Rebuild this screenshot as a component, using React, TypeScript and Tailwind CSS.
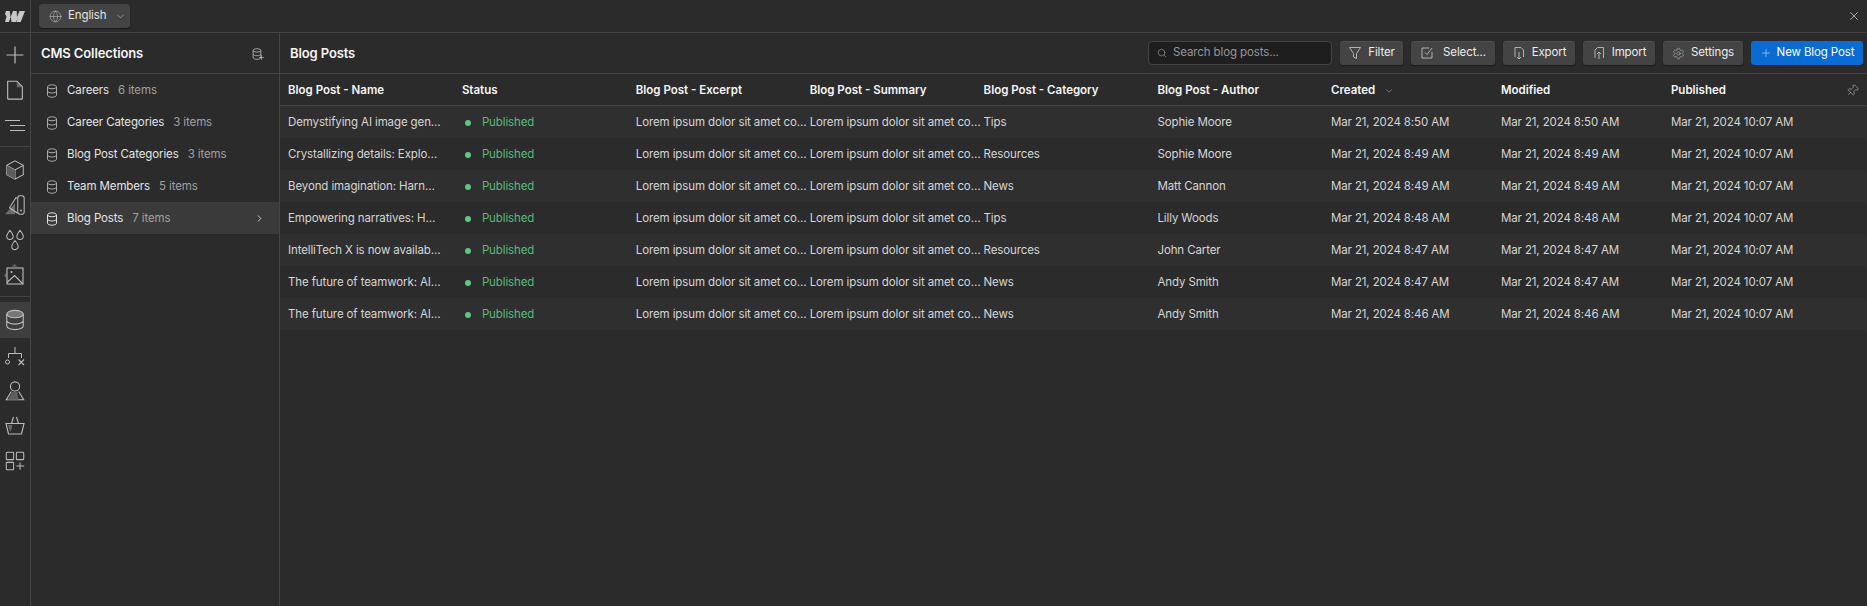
import React from "react";
import { Globe, ChevronDown, ChevronRight, X, Search, Plus, Pin, Settings } from "lucide-react";

const S = ({ children, size = 22 }: { children: React.ReactNode; size?: number }) => (
  <svg width={size} height={size} viewBox="0 0 24 24" fill="none" stroke="currentColor" strokeWidth="1">
    {children}
  </svg>
);

const Db = ({ size = 14 }: { size?: number }) => (
  <svg width={size} height={size} viewBox="0 0 14 14" fill="none" stroke="currentColor" strokeWidth="1">
    <ellipse cx="7" cy="2.800" rx="4.500" ry="2" />
    <path d="M2.500 2.800v8.400c0 1.100 2 2 4.500 2s4.500-.9 4.500-2V2.800M2.500 7c0 1.100 2 2 4.500 2s4.500-.9 4.500-2" />
  </svg>
);

const railTop = [
  <S size={24}><path d="M12 3.500v17M3.500 12h17" strokeWidth="1.200" /></S>,
  <S size={22}><path d="M4 2.500h10l6 6v13a.5.5 0 0 1-.5.5h-15a.5.5 0 0 1-.5-.5z" strokeWidth="1.200" /><path d="M14 3.500l5.500 5.500H14z" fill="#6a6a6a" stroke="none" /></S>,
  <S size={24}><path d="M2 7.500h15M7 12.500h15M7 17.500h15" strokeWidth="1.100" /></S>,
];
const railMid = [
  <S size={22}><path d="M12 2l9 5v10l-9 5-9-5V7z M3 7l9 5 9-5M12 12v10" strokeWidth="1.100" /><path d="M3 7l9 5v10l-9-5z" fill="#5e5e5e" stroke="none" /></S>,
  <S size={22}><path d="M1 22l11-12v12z" fill="#6a6a6a" stroke="none" /><rect x="15" y="2" width="7" height="20" rx="2.500" strokeWidth="1.100" /><path d="M15 5l-2-1-7 11 9 6" strokeWidth="1.100" /><circle cx="18.500" cy="18" r="1" fill="currentColor" stroke="none" /></S>,
  <S size={22}><path d="M6.500 1.500c2 2.500 3.500 4.500 3.500 6.500a3.500 3.500 0 0 1-7 0c0-2 1.500-4 3.500-6.500zM17.500 1.500c2 2.500 3.500 4.500 3.500 6.500a3.500 3.500 0 0 1-7 0c0-2 1.500-4 3.500-6.500zM12 12.500c2 2.500 3.500 4.500 3.500 6.500a3.500 3.500 0 0 1-7 0c0-2 1.500-4 3.500-6.500z" strokeWidth="1.100" /></S>,
  <S size={24}><path d="M11.500 1l3 2.500h-6zM1 12.500l2.500-3v6z" fill="#666" stroke="none" /><rect x="4" y="5" width="16" height="16" strokeWidth="1.100" /><path d="M4 19.500l7.500-7 8.500 8.500" strokeWidth="1.100" /><circle cx="8.500" cy="9" r="1" fill="currentColor" stroke="none" /></S>,
];
const railBottom = [
  <S size={24}><path d="M12 3v6.500M5.500 14v-4.500h13V14" strokeWidth="1" /><circle cx="4.500" cy="18" r="2" strokeWidth="1" /><path d="M15.500 15.500l5.500 5.500M21 15.500L15.500 21" strokeWidth="1.100" /></S>,
  <S size={22}><circle cx="12" cy="7" r="5" strokeWidth="1.200" /><path d="M8 12.500L2.500 21.500h19L16 12.500" strokeWidth="1.200" /><path d="M9 13h5.500l1.500 8.500H4z" fill="#5e5e5e" stroke="none" /></S>,
  <S size={24}><path d="M3 9.500h18l-2.500 10.500h-13zM8.500 9.500l2-6.500M15.500 9.500l-2-6.500" strokeWidth="1.100" /><path d="M5 11h4v3l-2 4z" fill="#666" stroke="none" /></S>,
  <S size={22}><rect x="2.500" y="2.500" width="8" height="8" rx=".8" strokeWidth="1.100" /><rect x="13.500" y="2.500" width="8" height="8" rx=".8" strokeWidth="1.100" /><rect x="2.500" y="13.500" width="8" height="8" rx=".8" strokeWidth="1.100" /><path d="M17.500 13.500v8M13.500 17.500h8.500" strokeWidth="1.100" /></S>,
];

const collections = [
  ["Careers", "6 items"],
  ["Career Categories", "3 items"],
  ["Blog Post Categories", "3 items"],
  ["Team Members", "5 items"],
  ["Blog Posts", "7 items"],
];

const lorem = "Lorem ipsum dolor sit amet consectetur";
const rows = [
  ["Demystifying AI image generation", "Tips", "Sophie Moore", "Mar 21, 2024 8:50 AM"],
  ["Crystallizing details: Exploring AI", "Resources", "Sophie Moore", "Mar 21, 2024 8:49 AM"],
  ["Beyond imagination: Harnessing AI", "News", "Matt Cannon", "Mar 21, 2024 8:49 AM"],
  ["Empowering narratives: How AI", "Tips", "Lilly Woods", "Mar 21, 2024 8:48 AM"],
  ["IntelliTech X is now available today", "Resources", "John Carter", "Mar 21, 2024 8:47 AM"],
  ["The future of teamwork: AI-powered", "News", "Andy Smith", "Mar 21, 2024 8:47 AM"],
  ["The future of teamwork: AI-powered", "News", "Andy Smith", "Mar 21, 2024 8:46 AM"],
];

const Btn = ({ icon, label, w }: { icon: React.ReactNode; label: string; w: string }) => (
  <div className={`${w} h-6 flex items-center justify-center gap-[6px] rounded-[3px] bg-[#444444] text-[#ececec] shadow-[0_1px_1px_rgba(0,0,0,0.4),inset_0_1px_0_rgba(255,255,255,0.06)]`}>
    <span className="text-[#bdbdbd] flex">{icon}</span>
    <span>{label}</span>
  </div>
);

const Col = ({ children, w, cls = "pr-[2px]" }: { children: React.ReactNode; w: string; cls?: string }) => (
  <div className={`${w} ${cls} shrink-0 truncate`}>{children}</div>
);

export default function App() {
  return (
    <div className="h-[606px] w-[1867px] flex bg-[#2b2b2b] text-[11.5px] tracking-[-0.01em] overflow-hidden font-['Inter',sans-serif] text-[#d6d6d6]">
      <aside className="w-[31px] shrink-0 border-r border-[#444444] flex flex-col text-[#bcbcbc]">
        <div className="h-[33px] shrink-0 border-b border-[#444444] flex items-center justify-center pr-[1px]">
          <svg width="20" height="11" viewBox="0 0 20 11" fill="#c8c8c8">
            <path d="M20 0l-4.300 11h-4.200l1.800-4.600-2.300 4.600H6.500L5.800 5.500 4 11H0l1.500-5.500L0 3 1 0h3.700l.9 6L8 0h3.700l.3 6L14.500 0z" />
          </svg>
        </div>
        <div className="flex flex-col py-1 border-b border-[#444444]">
          {railTop.map((icon, i) => (
            <div key={i} className="h-[35px] flex items-center justify-center pr-[1px]">{icon}</div>
          ))}
        </div>
        <div className="flex flex-col pt-[5px] pb-[4px] border-b border-[#444444]">
          {railMid.map((icon, i) => (
            <div key={i} className="h-[35px] flex items-center justify-center pr-[1px]">{icon}</div>
          ))}
        </div>
        <div className="flex flex-col pt-[5px]">
          <div className="h-[36px] bg-[#3e3e3e] flex items-center justify-center pr-[1px]">
            <S size={22}>
              <ellipse cx="12" cy="5.500" rx="9" ry="4" strokeWidth="1.200" fill="#777" />
              <path d="M3 5.500v13c0 2.200 4 4 9 4s9-1.800 9-4v-13M3 12.500c0 2.200 4 4 9 4s9-1.800 9-4" strokeWidth="1.200" />
            </S>
          </div>
          {railBottom.map((icon, i) => (
            <div key={i} className="h-[35px] flex items-center justify-center pr-[1px]">{icon}</div>
          ))}
        </div>
      </aside>

      <div className="flex-1 min-w-0 flex flex-col">
        <header className="h-[33px] shrink-0 border-b border-[#444444] flex items-center pl-2 pr-[5px] justify-between">
          <div className="h-6 w-[91px] rounded-[4px] bg-[#444444] flex items-center pl-[10px] gap-[6px] text-[#e4e4e4] shadow-[0_1px_1px_rgba(0,0,0,0.4)]">
            <Globe size={13} strokeWidth={1} className="text-[#c4c4c4]" />
            <span>English</span>
            <ChevronDown size={11} strokeWidth={1.300} className="ml-[3px] text-[#bdbdbd]" />
          </div>
          <X size={14} strokeWidth={1.200} className="mr-[1px] text-[#dddddd]" />
        </header>

        <div className="flex-1 flex min-h-0">
          <section className="w-[249px] shrink-0 border-r border-[#444444] flex flex-col">
            <div className="h-[41px] shrink-0 border-b border-[#444444] flex items-center justify-between pl-[10px] pr-[16px] pt-px">
              <span className="text-[13px] font-semibold text-[#f5f5f5]">CMS Collections</span>
              <span className="relative text-[#b4b4b4]">
                <Db size={12} />
                <Plus size={7} className="absolute -right-[2px] -bottom-[1px] text-[#d0d0d0]" />
              </span>
            </div>
            {collections.map(([name, count], i) => {
              const active = i === 4;
              return (
                <div key={name} className={`h-8 flex items-center pl-[14px] pr-[14px] pt-px ${active ? "bg-[#3a3a3a]" : ""}`}>
                  <span className={`flex ${active ? "text-[#e0e0e0]" : "text-[#a8a8a8]"}`}><Db /></span>
                  <span className="ml-[8px] text-[#e4e4e4]">{name}</span>
                  <span className="ml-[9px] text-[#a0a0a0]">{count}</span>
                  {active && <ChevronRight size={11} className="ml-auto text-[#d8d8d8]" />}
                </div>
              );
            })}
          </section>

          <main className="flex-1 min-w-0 flex flex-col">
            <div className="h-[41px] shrink-0 border-b border-[#444444] flex items-center pl-[10px] pr-1 pt-px">
              <span className="text-[13px] font-semibold text-[#f5f5f5]">Blog Posts</span>
              <div className="ml-auto flex items-center gap-2 -mt-px">
                <div className="w-[184px] h-6 rounded-[4px] border border-[#444444] bg-[#1e1e1e] flex items-center pl-2 gap-[6px] text-[#969696]">
                  <Search size={10} strokeWidth={1.500} />
                  <span>Search blog posts...</span>
                </div>
                <Btn w="w-[63px]" label="Filter" icon={
                  <svg width="14" height="14" viewBox="0 0 14 14" fill="none" stroke="currentColor" strokeWidth="0.900"><path d="M1.500 1.500h11L8.500 7.500v5l-3-1.500V7.500z" /></svg>
                } />
                <Btn w="w-[84px]" label="Select..." icon={
                  <svg width="14" height="14" viewBox="0 0 14 14" fill="none" stroke="currentColor" strokeWidth="0.900" className="mr-[3px]"><path d="M2 2h7M2 2v10h10V6M5 6.500l2 2 5-6.500" /></svg>
                } />
                <Btn w="w-[72px]" label="Export" icon={
                  <svg width="14" height="14" viewBox="0 0 14 14" fill="none" stroke="currentColor" strokeWidth="0.900"><path d="M3 11V1.500h6l2.500 2.500v7M7 6v7M5 11l2 2 2-2" /></svg>
                } />
                <Btn w="w-[72px]" label="Import" icon={
                  <svg width="14" height="14" viewBox="0 0 14 14" fill="none" stroke="currentColor" strokeWidth="0.900"><path d="M3 12V4l2.500-2.500h6V12M7 13V6M5 8l2-2 2 2" /></svg>
                } />
                <Btn w="w-[80px]" label="Settings" icon={<Settings size={13} strokeWidth={1} />} />
                <div className="w-[112px] h-6 rounded-[3px] bg-[#0a6bd3] flex items-center justify-center gap-[5px] text-white shadow-[0_1px_1px_rgba(0,0,0,0.4)]">
                  <Plus size={12} strokeWidth={1.200} className="text-[#cfe3fb]" />
                  <span>New Blog Post</span>
                </div>
              </div>
            </div>

            <div className="h-8 shrink-0 border-b border-[#444444] flex items-center pl-2 pr-2 pt-[2px] font-semibold tracking-normal text-[#f5f5f5]">
              <Col w="w-[173.9px]">Blog Post - Name</Col>
              <Col w="w-[173.9px]">Status</Col>
              <Col w="w-[173.9px]">Blog Post - Excerpt</Col>
              <Col w="w-[173.9px]">Blog Post - Summary</Col>
              <Col w="w-[173.9px]">Blog Post - Category</Col>
              <Col w="w-[173.5px]">Blog Post - Author</Col>
              <div className="w-[170px] shrink-0 flex items-center">Created<ChevronDown size={10} strokeWidth={1.200} className="ml-[9px] text-[#c4c4c4]" /></div>
              <Col w="w-[170px]">Modified</Col>
              <Col w="w-[150px]">Published</Col>
              <Pin size={13} strokeWidth={1} className="ml-auto rotate-45 text-[#c8c8c8]" />
            </div>

            {rows.map(([name, cat, author, date], i) => (
              <div key={i} className={`h-8 shrink-0 flex items-center pl-2 pt-px ${i % 2 === 0 ? "bg-[#2f2f2f]" : ""}`}>
                <Col w="w-[173.9px]" cls="pr-[21px]">{name}</Col>
                <div className="w-[173.9px] shrink-0 flex items-center text-[#5cb87a]">
                  <span className="w-[6px] h-[6px] rounded-full bg-[#5cc880] ml-[3px] mr-[11px]" />
                  Published
                </div>
                <Col w="w-[173.9px]">{lorem}</Col>
                <Col w="w-[173.9px]">{lorem}</Col>
                <Col w="w-[173.9px]">{cat}</Col>
                <Col w="w-[173.5px]">{author}</Col>
                <Col w="w-[170px]">{date}</Col>
                <Col w="w-[170px]">{date}</Col>
                <Col w="w-[170px]">Mar 21, 2024 10:07 AM</Col>
              </div>
            ))}
          </main>
        </div>
      </div>
    </div>
  );
}
